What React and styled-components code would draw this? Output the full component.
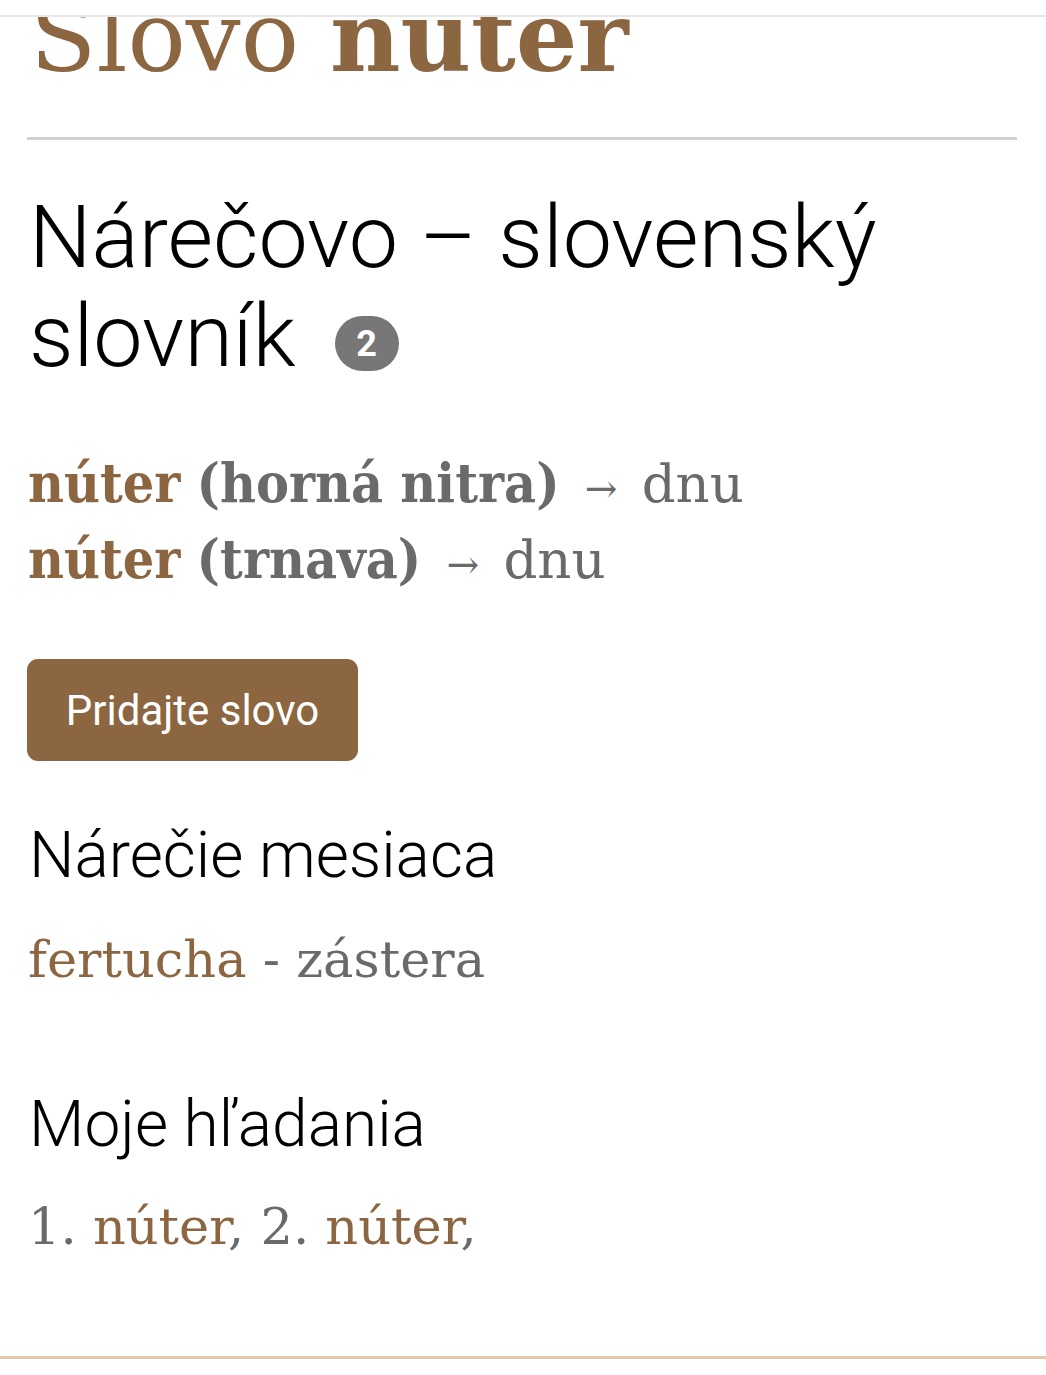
import React from "react";
import styled, { createGlobalStyle } from "styled-components";

const Global = createGlobalStyle`
  html, body { margin: 0; padding: 0; background: #fff; }
  body { font-family: Roboto, "Liberation Sans", sans-serif; }
`;

const BROWN = "#8b6640";
const GRAY = "#6a6a6a";
const SERIF = `"DejaVu Serif", "Liberation Serif", serif`;
const SERIF_COND = `"DejaVu Serif Condensed", "DejaVu Serif", serif`;
const SANS = `Roboto, "Liberation Sans", sans-serif`;

const Page = styled.div`
  width: 1046px;
  min-height: 1375px;
  display: flex;
  flex-direction: column;
`;

const TopBar = styled.header`
  height: 15px;
  border-bottom: 2px solid #e8e8e8;
  background: #fff;
`;

const Main = styled.main`
  overflow: hidden;
  padding: 0 29px 0 27px;
`;

const Title = styled.h1`
  margin: -28px 0 0 3px;
  font-family: ${SERIF};
  font-size: 97px;
  line-height: 1;
  font-weight: 400;
  color: ${BROWN};
  white-space: nowrap;
  b { font-weight: 700; }
`;

const Rule = styled.hr`
  margin: 51px 0 0;
  border: 0;
  height: 3px;
  background: #d0d0d0;
`;

const Heading = styled.h2`
  margin: ${(p) => p.$mt}px 0 0 2px;
  font-family: ${SANS};
  font-weight: 300;
  font-size: ${(p) => p.$size}px;
  line-height: ${(p) => p.$lh}px;
  color: #000;
`;

const Badge = styled.span`
  display: inline-flex;
  align-items: center;
  justify-content: center;
  width: 64px;
  height: 55px;
  margin-left: 39px;
  border-radius: 999px;
  background: #777;
  color: #fff;
  font-family: ${SANS};
  font-weight: 700;
  font-size: 36px;
  line-height: 1;
  vertical-align: middle;
  position: relative;
  top: 1px;
`;

const Lines = styled.div`
  margin-top: ${(p) => p.$mt}px;
  font-family: ${SERIF};
  font-size: 51px;
  line-height: ${(p) => p.$lh}px;
  color: ${GRAY};
  padding-left: 1px;
`;

const Line = styled.div`
  white-space: nowrap;
`;

const Word = styled.span`
  color: ${BROWN};
  line-height: 1;
  font-family: ${(p) => (p.$bold ? SERIF_COND : SERIF)};
  font-weight: ${(p) => (p.$bold ? 700 : 400)};
  font-size: ${(p) => (p.$bold ? "55px" : "inherit")};
`;

const Region = styled.span`
  font-family: ${SERIF_COND};
  font-weight: 700;
  font-size: 55px;
  line-height: 1;
  color: ${GRAY};
`;

const Arrow = styled.span`
  font-size: 39px;
  line-height: 1;
  color: ${GRAY};
  margin: 0 8px 0 9px;
`;

const Gloss = styled.span`
  font-size: 53px;
  line-height: 1;
`;

const AddButton = styled.button`
  margin-top: 60px;
  width: 331px;
  height: 102px;
  border: 0;
  border-radius: 11px;
  background: ${BROWN};
  color: #fff;
  font-family: ${SANS};
  font-size: 42px;
  font-weight: 400;
  cursor: pointer;
  padding: 0;
  display: block;
`;

const Footer = styled.footer`
  margin-top: auto;
  margin-bottom: 16px;
  border-top: 3px solid #e2c9a8;
`;

export default function App() {
  return (
    <Page>
      <Global />
      <TopBar />
      <Main>
        <Title>
          Slovo <b>núter</b>
        </Title>
        <Rule />
        <Heading $mt={47} $size={88} $lh={99}>
          Nárečovo – slovenský slovník<Badge>2</Badge>
        </Heading>
        <Lines $mt={62} $lh={76}>
          <Line>
            <Word $bold>núter</Word> <Region>(horná nitra)</Region>{" "}
            <Arrow>→</Arrow> <Gloss>dnu</Gloss>
          </Line>
          <Line>
            <Word $bold>núter</Word> <Region>(trnava)</Region>{" "}
            <Arrow>→</Arrow> <Gloss>dnu</Gloss>
          </Line>
        </Lines>
        <AddButton>Pridajte slovo</AddButton>
        <Heading $mt={58} $size={64} $lh={74}>
          Nárečie mesiaca
        </Heading>
        <Lines $mt={29} $lh={76}>
          <Line>
            <Word>fertucha</Word> - zástera
          </Line>
        </Lines>
        <Heading $mt={90} $size={64} $lh={74}>
          Moje hľadania
        </Heading>
        <Lines $mt={27} $lh={76}>
          <Line>
            1. <Word>núter</Word>, 2. <Word>núter</Word>,
          </Line>
        </Lines>
      </Main>
      <Footer />
    </Page>
  );
}
